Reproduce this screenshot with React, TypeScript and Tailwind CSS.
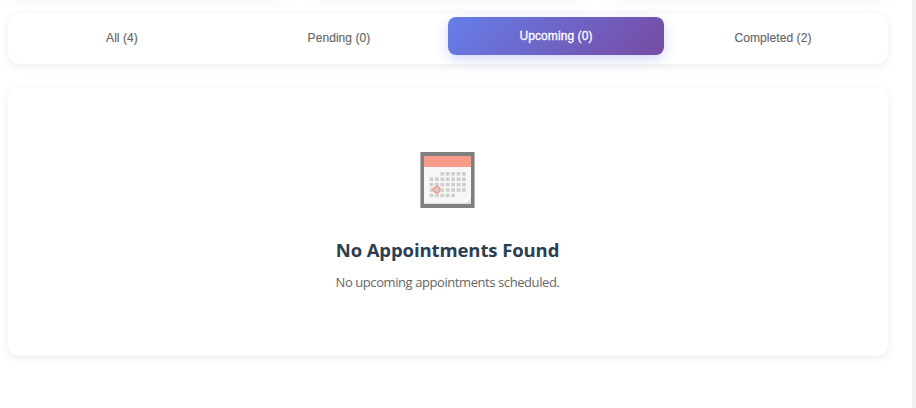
const tabs = [
  { label: 'All', count: 4 },
  { label: 'Pending', count: 0 },
  { label: 'Upcoming', count: 0, active: true },
  { label: 'Completed', count: 2 },
];

function CalendarIcon() {
  const cells: [number, number][] = [];
  for (let row = 0; row < 5; row++) {
    for (let col = 0; col < 7; col++) {
      if (row === 0 && col < 2) continue;
      if (row === 4 && col > 4) continue;
      cells.push([9.6 + col * 5.4, 20 + row * 5.4]);
    }
  }
  return (
    <svg className="mr-px" width="55" height="56" viewBox="0 0 55 56" aria-hidden="true">
      <rect x="0.4" width="54.2" height="56" fill="#808080" />
      <rect x="4" y="4" width="47" height="48" fill="#f7f7f7" />
      <rect x="4" y="4" width="47" height="11" fill="#f89b8a" />
      {cells.map(([x, y]) => (
        <rect key={`${x}-${y}`} x={x} y={y} width="3.8" height="3.6" fill="#cfcfcf" />
      ))}
      <circle cx="16.8" cy="37.8" r="3" fill="none" stroke="#f59a8b" strokeWidth="1.5" />
      <path d="M12.3 38.2c1.2-1.8 3-3.3 5-3.8" fill="none" stroke="#f59a8b" strokeWidth="1.3" />
      <path d="M45 51.8 51 45.5V52z" fill="#e3e3e3" />
      <path d="M45 51.8V46.8L51 45.5z" fill="#fff" />
      <path d="M4 51.5h47" stroke="#dedede" />
    </svg>
  );
}

export default function App() {
  return (
    <div className="flex h-[408px] w-[916px] overflow-hidden bg-white">
      <main className="w-[912px] pl-2 pr-6">
        <div className="-mt-[51px] grid h-10 grid-cols-3 gap-5">
          <div className="rounded-xl bg-white shadow-[0_4px_20px_rgba(0,0,0,0.1)]" />
          <div className="rounded-xl bg-white shadow-[0_4px_20px_rgba(0,0,0,0.1)]" />
          <div className="rounded-xl bg-white shadow-[0_4px_20px_rgba(0,0,0,0.1)]" />
        </div>
        <nav className="mt-6 flex h-[51px] gap-px rounded-xl bg-white pl-1.5 pt-1 font-['Liberation_Sans',Arial,sans-serif] text-[12px] leading-[14px] tracking-[0.07px] shadow-[0_2px_10px_rgba(0,0,0,0.08)]">
          {tabs.map((tab) => (
            <button
              key={tab.label}
              className={
                tab.active
                  ? 'flex h-[38px] w-[216px] items-center justify-center rounded-lg bg-linear-[135deg,#667eea,#764ba2] font-medium text-white shadow-[0_4px_12px_rgba(102,126,234,0.3)] [-webkit-text-stroke:0.3px_white]'
                  : 'flex h-[38px] w-[216px] items-center justify-center rounded-lg pt-1 font-medium text-[#666] [-webkit-text-stroke:0.15px_#666]'
              }
            >
              {tab.label} ({tab.count})
            </button>
          ))}
        </nav>
        <section className="mt-6 flex h-[268px] flex-col items-center rounded-xl bg-white pr-px pt-16 font-['Open_Sans','Segoe_UI',sans-serif] shadow-[0_2px_10px_rgba(0,0,0,0.08)]">
          <CalendarIcon />
          <h3 className="mt-[30px] whitespace-nowrap text-[18.5px] font-bold leading-6 tracking-[-0.1px] text-[#2c3e50]">
            No Appointments Found
          </h3>
          <p className="mt-2 whitespace-nowrap text-[13px] leading-6 tracking-[-0.42px] text-[#666]">
            No upcoming appointments scheduled.
          </p>
        </section>
      </main>
      <div className="w-1 bg-[#f0f1f3]" />
    </div>
  );
}
